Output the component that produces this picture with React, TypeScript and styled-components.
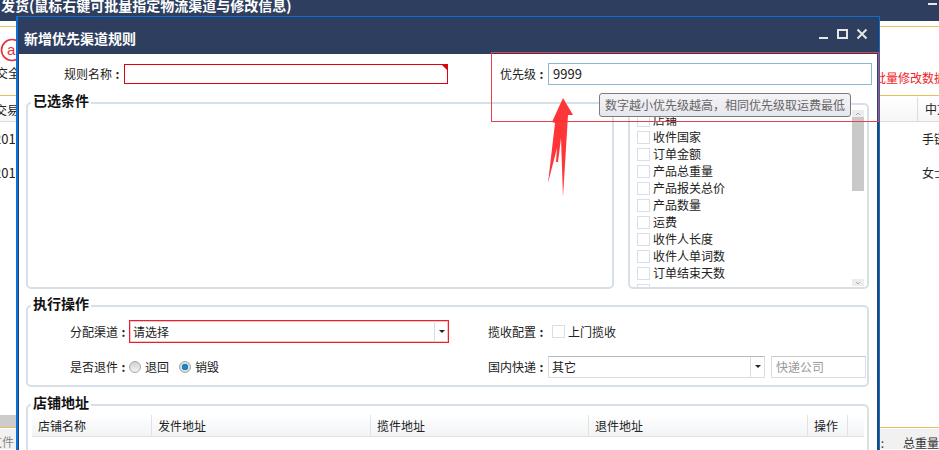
import React from "react";
import styled, { createGlobalStyle } from "styled-components";

const Global = createGlobalStyle`
  html, body { margin: 0; padding: 0; background: #fff; }
  body { font: 12px/17px "Noto Sans CJK SC", "Liberation Sans", sans-serif; color: #222; }
`;

const Page = styled.div`
  position: relative;
  width: 939px;
  height: 450px;
  overflow: hidden;
  display: flex;
  flex-direction: column;
`;
const TopBar = styled.div`
  height: 21px;
  background: #2d3e5e;
  color: #fff;
  font-size: 14px;
  font-weight: 700;
  line-height: 11px;
  padding-left: 1px;
  display: flex;
  justify-content: space-between;
  flex: none;
`;
const TopMin = styled.span`
  width: 9px;
  height: 2px;
  margin: 3px 2px 0 0;
  background: #e8e8e8;
`;
const Toolbar = styled.div`
  margin-top: 5px;
  height: 68px;
  flex: none;
  border-top: 1px solid #e6c05c;
  border-bottom: 1px solid #e6c05c;
  display: flex;
  justify-content: space-between;
`;
const LogoCol = styled.div`
  display: flex;
  flex-direction: column;
  padding-top: 11px;
`;
const ToolText = styled.span`
  margin-top: 1px;
  font-size: 12px;
  margin-left: -4px;
`;
const RedText = styled.span`
  color: #f01c28;
  font-size: 12px;
  margin-top: 42px;
  margin-right: -7px;
  white-space: nowrap;
`;
const BgHead = styled.div`
  height: 24px;
  margin-top: 1px;
  flex: none;
  display: flex;
  justify-content: space-between;
  align-items: center;
  background: linear-gradient(#fff, #f6f6f6);
  border-bottom: 1px solid #dcdcdc;
`;
const BgHeadLeft = styled.span`
  margin-left: -5px;
  padding-top: 1px;
`;
const BgCell = styled.span<{ $w: number }>`
  width: ${(p) => p.$w}px;
  white-space: nowrap;
  box-sizing: border-box;
`;
const BgDate = styled(BgCell)`
  margin-left: -6px;
  font-size: 13px;
  overflow: hidden;
`;
const BgHeadRight = styled(BgCell)`
  align-self: stretch;
  line-height: 24px;
  border-left: 1px solid #dcdcdc;
  padding-left: 7px;
`;
const BgRow = styled.div`
  height: 34px;
  box-sizing: border-box;
  padding-top: 8px;
  flex: none;
  display: flex;
  justify-content: space-between;
  align-items: flex-start;
`;
const BgRows = styled.div`
  flex: 1;
`;
const GrayBand = styled.div`
  height: 12px;
  width: 120px;
  flex: none;
  background: #ccc;
`;
const BottomBar = styled.div`
  flex: none;
  height: 21px;
  border-top: 1px solid #e6c05c;
  padding-top: 1px;
`;
const BottomInner = styled.div`
  height: 20px;
  background: #f1f1f1;
  display: flex;
  justify-content: space-between;
  align-items: flex-end;
  color: #333;
`;
const BottomLeft = styled.span`
  color: #888;
  margin-left: -10px;
  line-height: 14px;
`;
const BottomRight = styled.span`
  display: flex;
  gap: 19px;
  white-space: nowrap;
  line-height: 12px;
  height: 12px;
`;

const Modal = styled.div`
  position: absolute;
  left: 16px;
  top: 16px;
  width: 864px;
  height: 440px;
  box-sizing: border-box;
  border: 1px solid #0a70d8;
  border-left-width: 2px;
  border-bottom: 0;
  background: #fff;
  display: flex;
  flex-direction: column;
`;
const TitleBar = styled.div`
  height: 37px;
  flex: none;
  background: #2d3e5e;
  color: #fff;
  font-size: 14px;
  font-weight: 700;
  display: flex;
  align-items: center;
  justify-content: space-between;
  padding: 6px 9px 0 6px;
  box-sizing: border-box;
`;
const WinIcons = styled.svg`
  width: 52px;
  height: 14px;
  margin-top: -10px;
`;
const Body = styled.div`
  flex: 1;
  border-left: 1px solid #2a4470;
  border-right: 2px solid #2a4470;
  padding: 9px 8px 0 7px;
  display: flex;
  flex-direction: column;
`;
const TopRow = styled.div`
  display: flex;
  height: 22px;
  flex: none;
  margin-bottom: 8px;
`;
const Label = styled.label<{ $w: number; $pr?: number }>`
  width: ${(p) => p.$w}px;
  flex: none;
  display: flex;
  justify-content: flex-end;
  padding-right: ${(p) => p.$pr ?? 0}px;
  box-sizing: border-box;
  line-height: 22px;
  white-space: nowrap;
`;
const Colon = styled.span`
  width: 11px;
  flex: none;
  text-align: center;
  font-weight: 700;
`;
const NameInput = styled.div`
  position: relative;
  width: 324px;
  height: 20px;
  flex: none;
  margin-top: 1px;
  box-sizing: border-box;
  border: 1px solid #e00010;
  &::after {
    content: "";
    position: absolute;
    right: 0;
    top: 0;
    border-style: solid;
    border-width: 0 5px 5px 0;
    border-color: transparent #e00010 transparent transparent;
  }
`;
const PrioInput = styled.div`
  width: 324px;
  height: 22px;
  flex: none;
  box-sizing: border-box;
  border: 1px solid #8ab8d8;
  padding-left: 4px;
  font-size: 13px;
  line-height: 20px;
`;
const Spacer = styled.div<{ $w: number }>`
  width: ${(p) => p.$w}px;
  flex: none;
`;
const CondRow = styled.div`
  display: flex;
  gap: 14px;
  height: 196px;
  flex: none;
  margin-bottom: 7px;
`;
const Field = styled.fieldset<{ $w?: number }>`
  margin: 0;
  padding: 0;
  min-width: 0;
  box-sizing: border-box;
  border: 2px solid #d7e0e8;
  border-radius: 5px;
  ${(p) => (p.$w ? `width: ${p.$w}px; flex: none;` : "")}
`;
const Legend = styled.legend`
  margin-left: 3px;
  padding: 0 2px 6px 2px;
  font-size: 14px;
  font-weight: 700;
  line-height: 14px;
  color: #111;
`;
const ListBox = styled.div`
  width: 241px;
  height: 186px;
  margin-top: 10px;
  box-sizing: border-box;
  border: 2px solid #d7e0e8;
  border-radius: 5px;
  display: flex;
  justify-content: space-between;
  overflow: hidden;
`;
const ListRows = styled.div`
  padding: 7px 0 0 7px;
`;
const ListRow = styled.div`
  height: 17px;
  box-sizing: border-box;
  display: flex;
  align-items: flex-start;
  gap: 3px;
  line-height: 15px;
`;
const Check = styled.span`
  width: 13px;
  height: 13px;
  flex: none;
  box-sizing: border-box;
  border: 1px solid #d8dfe8;
  background: #fff;
`;
const ListCheck = styled(Check)`
  margin-top: 2px;
`;
const Scroll = styled.div`
  width: 12px;
  margin: 5px 3px 0 0;
  height: 176px;
  display: flex;
  flex-direction: column;
  background: #f2f2f2;
`;
const ScrollBtn = styled.div`
  height: 7px;
  flex: none;
  background: #ececec;
  color: #aaa;
  display: flex;
  align-items: center;
  justify-content: center;
`;
const ScrollThumb = styled.div`
  height: 74px;
  flex: none;
  background: #c9c9c9;
`;
const ScrollRest = styled.div`
  flex: 1;
  background: #fff;
`;
const ActionField = styled(Field)`
  height: 91px;
  flex: none;
  margin-bottom: 8px;
`;
const ActionGrid = styled.div`
  display: grid;
  grid-template-columns: 421px 1fr;
  column-gap: 39px;
  row-gap: 12px;
  padding-top: 4px;
`;
const FormRow = styled.div`
  display: flex;
  height: 23px;
  align-items: center;
`;
const SelectBox = styled.div<{ $w: number; $error?: boolean }>`
  width: ${(p) => p.$w}px;
  height: ${(p) => (p.$error ? 23 : 22)}px;
  flex: none;
  box-sizing: border-box;
  display: flex;
  border: 1px solid ${(p) => (p.$error ? "#f01c28" : "#dcdce2")};
  border-top-color: ${(p) => (p.$error ? "#f01c28" : "#b8b8c0")};
  ${(p) => (p.$error ? "box-shadow: inset 0 0 0 1px #f3c4c8;" : "")}
`;
const SelectValue = styled.span<{ $lh: number }>`
  flex: 1;
  padding-left: 3px;
  line-height: ${(p) => p.$lh}px;
`;
const SelectArrow = styled.span`
  width: 13px;
  flex: none;
  border-left: 1px solid #dcdce2;
  display: flex;
  align-items: center;
  justify-content: center;
  &::after {
    content: "";
    border-style: solid;
    border-width: 3px 3px 0 3px;
    border-color: #222 transparent transparent transparent;
  }
`;
const Radio = styled.span<{ $on?: boolean }>`
  width: 12px;
  height: 12px;
  flex: none;
  border-radius: 50%;
  box-sizing: border-box;
  border: 1px solid #a8a8a8;
  background: ${(p) =>
    p.$on
      ? "radial-gradient(circle, #1a86c0 0 3px, #dcdcdc 3.5px)"
      : "linear-gradient(#d0d0d0, #f4f4f4)"};
`;
const OptText = styled.span<{ $ml: number; $mr?: number }>`
  margin-left: ${(p) => p.$ml}px;
  margin-right: ${(p) => p.$mr ?? 0}px;
`;
const Placeholder = styled.div`
  width: 95px;
  height: 22px;
  margin-left: 6px;
  box-sizing: border-box;
  border: 1px solid #dcdce2;
  border-top-color: #c8c8d0;
  padding-left: 4px;
  line-height: 20px;
  color: #999;
`;
const ShopField = styled(Field)`
  flex: 1;
`;
const ShopHead = styled.div`
  display: grid;
  grid-template-columns: 120px 219px 218px 219px 40px;
  height: 21px;
  margin: 0 3px 0 4px;
  background: linear-gradient(#fff, #f1f3f5);
  border-bottom: 1px solid #dfe2e6;
`;
const ShopCol = styled.span`
  padding-left: 6px;
  border-right: 1px solid #e2e2e2;
  line-height: 21px;
`;

const Annot = styled.div`
  position: absolute;
  left: 491px;
  top: 52px;
  width: 388px;
  height: 70px;
  box-sizing: border-box;
  border: 1px solid #e8404a;
  pointer-events: none;
`;
const Tip = styled.div`
  position: absolute;
  left: 599px;
  top: 93px;
  width: 252px;
  height: 24px;
  box-sizing: border-box;
  border: 1px solid #7c7c80;
  border-radius: 3px;
  background: linear-gradient(#f4f4f6, #e6e6ee);
  color: #666;
  padding-left: 5px;
  line-height: 22px;
  white-space: nowrap;
`;
const Arrow = styled.svg`
  position: absolute;
  left: 545px;
  top: 98px;
  width: 30px;
  height: 102px;
`;

const items = ["店铺", "收件国家", "订单金额", "产品总重量", "产品报关总价", "产品数量", "运费", "收件人长度", "收件人单词数", "订单结束天数", ""];

export default function App() {
  return (
    <Page>
      <Global />
      <TopBar>
        <span>发货(鼠标右键可批量指定物流渠道与修改信息)</span>
        <TopMin />
      </TopBar>
      <Toolbar>
        <LogoCol>
          <svg width="26" height="25" viewBox="0 0 26 25">
            <circle cx="12" cy="12" r="10.5" fill="none" stroke="#e8303a" strokeWidth="1.6" />
            <text x="7" y="17" fontSize="15" fill="#e8303a" fontFamily="Liberation Sans">a</text>
          </svg>
          <ToolText>交全</ToolText>
        </LogoCol>
        <RedText>批量修改数据</RedText>
      </Toolbar>
      <BgHead>
        <BgHeadLeft>交易</BgHeadLeft>
        <BgHeadRight $w={22}>中文</BgHeadRight>
      </BgHead>
      <BgRows>
        <BgRow>
          <BgDate $w={21}>2018</BgDate>
          <BgCell $w={17}>手链</BgCell>
        </BgRow>
        <BgRow>
          <BgDate $w={21}>2018</BgDate>
          <BgCell $w={17}>女士</BgCell>
        </BgRow>
      </BgRows>
      <GrayBand />
      <BottomBar>
        <BottomInner>
          <BottomLeft>文件</BottomLeft>
          <BottomRight>
            <span>:</span>
            <span>总重量</span>
          </BottomRight>
        </BottomInner>
      </BottomBar>

      <Modal>
        <TitleBar>
          <span>新增优先渠道规则</span>
          <WinIcons viewBox="0 0 52 14" fill="none" stroke="#e6e6e6">
            <path d="M1 11h9" strokeWidth="2" />
            <rect x="20" y="3" width="9" height="8" strokeWidth="2" />
            <path d="M39.5 2.5l9 9M48.5 2.5l-9 9" strokeWidth="2" />
          </WinIcons>
        </TitleBar>
        <Body>
          <TopRow>
            <Label $w={98} $pr={1}>规则名称<Colon>:</Colon></Label>
            <NameInput />
            <Spacer $w={40} />
            <Label $w={60} $pr={1}>优先级<Colon>:</Colon></Label>
            <PrioInput>9999</PrioInput>
          </TopRow>
          <CondRow>
            <Field $w={588}>
              <Legend>已选条件</Legend>
            </Field>
            <ListBox>
              <ListRows>
                {items.map((t, i) => (
                  <ListRow key={i}>
                    <ListCheck />
                    {t}
                  </ListRow>
                ))}
              </ListRows>
              <Scroll>
                <ScrollBtn>
                  <svg width="6" height="4" viewBox="0 0 6 4" fill="none" stroke="#aaa"><path d="M1 3l2-2 2 2" /></svg>
                </ScrollBtn>
                <ScrollThumb />
                <ScrollRest />
                <ScrollBtn>
                  <svg width="6" height="4" viewBox="0 0 6 4" fill="none" stroke="#aaa"><path d="M1 1l2 2 2-2" /></svg>
                </ScrollBtn>
              </Scroll>
            </ListBox>
          </CondRow>
          <ActionField>
            <Legend>执行操作</Legend>
            <ActionGrid>
              <FormRow>
                <Label $w={101}>分配渠道<Colon>:</Colon></Label>
                <SelectBox $w={320} $error>
                  <SelectValue $lh={21}>请选择</SelectValue>
                  <SelectArrow />
                </SelectBox>
              </FormRow>
              <FormRow>
                <Label $w={60} $pr={1}>揽收配置<Colon>:</Colon></Label>
                <OptText $ml={4} />
                <Check />
                <OptText $ml={3}>上门揽收</OptText>
              </FormRow>
              <FormRow>
                <Label $w={101}>是否退件<Colon>:</Colon></Label>
                <Radio />
                <OptText $ml={4} $mr={10}>退回</OptText>
                <Radio $on />
                <OptText $ml={4}>销毁</OptText>
              </FormRow>
              <FormRow>
                <Label $w={60} $pr={1}>国内快递<Colon>:</Colon></Label>
                <SelectBox $w={217}>
                  <SelectValue $lh={19}>其它</SelectValue>
                  <SelectArrow />
                </SelectBox>
                <Placeholder>快递公司</Placeholder>
              </FormRow>
            </ActionGrid>
          </ActionField>
          <ShopField>
            <Legend>店铺地址</Legend>
            <ShopHead>
              <ShopCol>店铺名称</ShopCol>
              <ShopCol>发件地址</ShopCol>
              <ShopCol>揽件地址</ShopCol>
              <ShopCol>退件地址</ShopCol>
              <ShopCol>操作</ShopCol>
            </ShopHead>
          </ShopField>
        </Body>
      </Modal>

      <Tip>数字越小优先级越高，相同优先级取运费最低</Tip>
      <Annot />
      <Arrow viewBox="0 0 30 102">
        <path d="M18 0L28 17H23L18 99L16 40L13 64H11L12 50L3 85L10 25L7 24Z" fill="#ff3638" />
      </Arrow>
    </Page>
  );
}
